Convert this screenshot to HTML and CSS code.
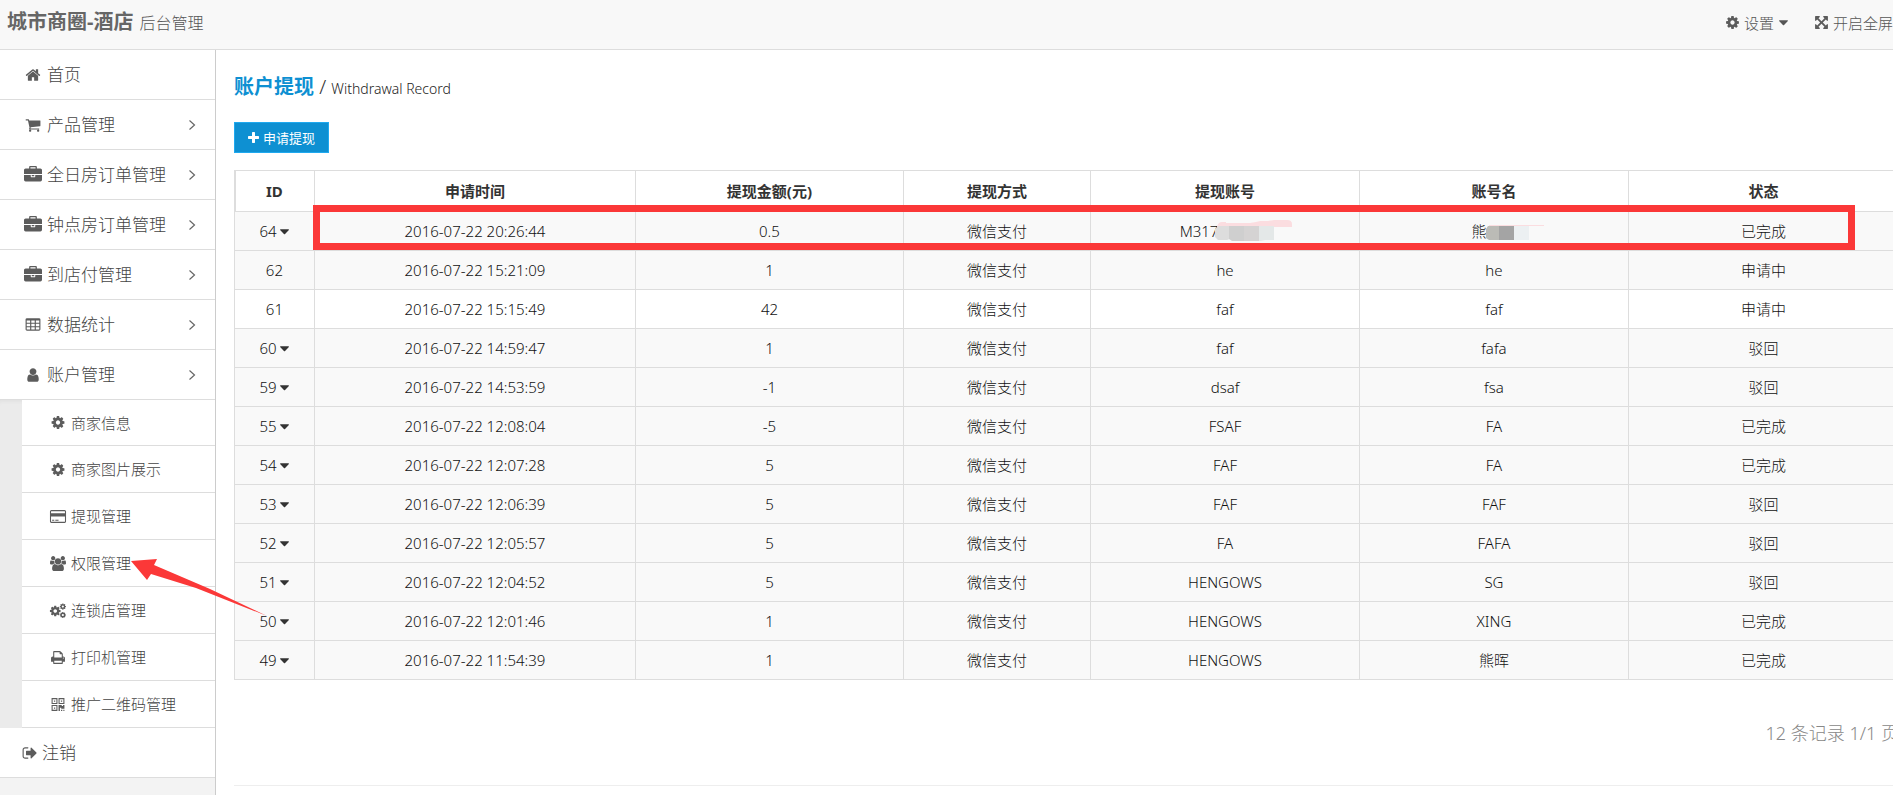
FILE: index.html
```html
<!DOCTYPE html>
<html lang="zh-CN">
<head>
<meta charset="utf-8">
<title>账户提现</title>
<link rel="stylesheet" href="styles.css">
</head>
<body>
<svg class="sprite" aria-hidden="true">
  <symbol id="home" viewBox="0 0 1792 1792"><path d="M1472 992v480q0 26-19 45t-45 19h-384v-384h-256v384h-384q-26 0-45-19t-19-45v-480q0-1 .5-3t.5-3l575-474 575 474q1 2 1 6zm223-69l-62 74q-8 9-21 11h-3q-13 0-21-7l-692-577-692 577q-12 8-24 7-13-2-21-11l-62-74q-8-10-7-23.5t11-21.5l719-599q32-26 76-26t76 26l244 204v-195q0-14 9-23t23-9h192q14 0 23 9t9 23v408l219 182q10 8 11 21.5t-7 23.5z"/></symbol>
  <symbol id="cart" viewBox="0 0 1792 1792"><path d="M704 1536q0 52-38 90t-90 38-90-38-38-90 38-90 90-38 90 38 38 90zm896 0q0 52-38 90t-90 38-90-38-38-90 38-90 90-38 90 38 38 90zm128-1088v512q0 24-16.5 42.5t-40.5 21.5l-1044 122q13 60 13 70 0 16-24 64h920q26 0 45 19t19 45-19 45-45 19h-1024q-26 0-45-19t-19-45q0-11 8-31.5t16-36 21.5-40 15.5-29.5l-177-823h-204q-26 0-45-19t-19-45 19-45 45-19h256q16 0 28.5 6.5t19.5 15.5 13 24.5 8 26 5.5 29.5 4.5 26h1201q26 0 45 19t19 45z"/></symbol>
  <symbol id="briefcase" viewBox="0 0 1792 1792"><path d="M640 256h512v-128h-512v128zm1152 640v480q0 66-47 113t-113 47h-1472q-66 0-113-47t-47-113v-480h672v160q0 26 19 45t45 19h320q26 0 45-19t19-45v-160h672zm-768 0v128h-256v-128h256zm768-480v384h-1792v-384q0-66 47-113t113-47h352v-160q0-40 28-68t68-28h576q40 0 68 28t28 68v160h352q66 0 113 47t47 113z"/></symbol>
  <symbol id="table" viewBox="0 0 1792 1792"><path fill-rule="evenodd" d="M224 128h1344q66 0 113 47t47 113v1088q0 66-47 113t-113 47h-1344q-66 0-113-47t-47-113v-1088q0-66 47-113t113-47zM192 384v256h384v-256zM704 384v256h384v-256zM1216 384v256h384v-256zM192 768v256h384v-256zM704 768v256h384v-256zM1216 768v256h384v-256zM192 1152v256h384v-256zM704 1152v256h384v-256zM1216 1152v256h384v-256z"/></symbol>
  <symbol id="user" viewBox="0 0 1792 1792"><path d="M1536 1399q0 109-62.500 187t-150.500 78h-854q-88 0-150.500-78t-62.500-187q0-85 8.500-160.500t31.500-152 58.500-131 94-89 134.500-34.500q131 128 313 128t313-128q76 0 134.500 34.500t94 89 58.500 131 31.500 152 8.500 160.500zm-256-887q0 159-112.500 271.500t-271.500 112.500-271.500-112.500-112.500-271.500 112.500-271.500 271.500-112.500 271.500 112.500 112.500 271.500z"/></symbol>
  <symbol id="cog" viewBox="0 0 1792 1792"><path d="M1152 896q0-106-75-181t-181-75-181 75-75 181 75 181 181 75 181-75 75-181zm512-109v222q0 12-8 23t-20 13l-185 28q-19 54-39 91 35 50 107 138 10 12 10 25t-9 23q-27 37-99 108t-94 71q-12 0-26-9l-138-108q-44 23-91 38-16 136-29 186-7 28-36 28h-222q-14 0-24.500-8.500t-11.500-21.500l-28-184q-49-16-90-37l-141 107q-10 9-25 9-14 0-25-11-126-114-165-168-7-10-7-23 0-12 8-23 15-21 51-66.500t54-70.500q-27-50-41-99l-183-27q-13-2-21-12.500t-8-23.500v-222q0-12 8-23t19-13l186-28q14-46 39-92-40-57-107-138-10-12-10-24 0-10 9-23 26-36 98.500-107.500t94.500-71.500q13 0 26 10l138 107q44-23 91-38 16-136 29-186 7-28 36-28h222q14 0 24.500 8.500t11.500 21.500l28 184q49 16 90 37l142-107q9-9 24-9 13 0 25 10 129 119 165 170 7 8 7 22 0 12-8 23-15 21-51 66.500t-54 70.500q26 50 41 98l183 28q13 2 21 12.500t8 23.500z"/></symbol>
  <symbol id="card" viewBox="0 0 1920 1792"><path fill-rule="evenodd" d="M160 128h1600q66 0 113 47t47 113v1216q0 66-47 113t-113 47h-1600q-66 0-113-47t-47-113v-1216q0-66 47-113t113-47zm0 128q-32 0-32 32v224h1664v-224q0-32-32-32zM128 896v608q0 32 32 32h1600q32 0 32-32v-608zM256 1280h256v128h-256zM640 1280h384v128h-384z"/></symbol>
  <symbol id="users" viewBox="-64 0 1920 1792"><path d="M529 896q-162 5-265 128h-134q-82 0-138-40.500t-56-118.500q0-353 124-353 6 0 43.500 21t97.500 42.500 119 21.500q67 0 133-23-5 37-5 66 0 139 81 256zm1071 637q0 120-73 189.500t-194 69.500h-874q-121 0-194-69.500t-73-189.500q0-53 3.500-103.500t14-109 26.500-108.500 43-97.500 62-81 85.500-53.500 111.500-20q10 0 43 21.500t73 48 107 48 135 21.500 135-21.500 107-48 73-48 43-21.500q61 0 111.500 20t85.500 53.500 62 81 43 97.500 26.500 108.500 14 109 3.500 103.500zm-1024-1277q0 106-75 181t-181 75-181-75-75-181 75-181 181-75 181 75 75 181zm704 384q0 159-112.500 271.500t-271.500 112.500-271.500-112.500-112.500-271.500 112.500-271.500 271.500-112.500 271.500 112.500 112.500 271.500zm576 225q0 78-56 118.500t-138 40.500h-134q-103-123-265-128 81-117 81-256 0-29-5-66 66 23 133 23 59 0 119-21.500t97.500-42.500 43.500-21q124 0 124 353zm-128-609q0 106-75 181t-181 75-181-75-75-181 75-181 181-75 181 75 75 181z"/></symbol>
  <symbol id="cogs" viewBox="0 0 1920 1792"><use href="#cog" x="-110" y="220" width="1480" height="1480"/><use href="#cog" x="1110" y="0" width="860" height="860"/><use href="#cog" x="1110" y="1000" width="860" height="860"/></symbol>
  <symbol id="print" viewBox="0 0 1792 1792"><path d="M448 1536h896v-256h-896v256zm0-640h896v-384h-160q-40 0-68-28t-28-68v-160h-640v640zm1152 64q0-26-19-45t-45-19-45 19-19 45 19 45 45 19 45-19 19-45zm128 0v416q0 13-9.500 22.500t-22.500 9.500h-224v160q0 40-28 68t-68 28h-960q-40 0-68-28t-28-68v-160h-224q-13 0-22.500-9.500t-9.500-22.500v-416q0-79 56.500-135.500t135.500-56.500h64v-544q0-40 28-68t68-28h672q40 0 88 20t76 48l152 152q28 28 48 76t20 88v256h64q79 0 135.500 56.500t56.500 135.500z"/></symbol>
  <symbol id="qr" viewBox="0 0 14 14"><path fill-rule="evenodd" d="M1 1h5.500v5.500h-5.500zM2 2v3.500h3.500v-3.500zM7.500 1h5.500v5.500h-5.500zM8.500 2v3.500h3.500v-3.500zM1 7.500h5.500v5.500h-5.500zM2 8.500v3.500h3.500v-3.500zM3.200 3.200h1.200v1.200h-1.200zM9.700 3.200h1.200v1.200h-1.200zM3.200 9.700h1.200v1.200h-1.200zM7.500 7.500h3v1h1.200v-1h1.300v3.500h-3v-1h-1.200v3h-1.300zM9.800 12h1.200v1h-1.200zM12 12h1v1h-1z"/></symbol>
  <symbol id="signout" viewBox="0 0 1792 1792"><path d="M704 1440q0 4 1 20t.5 26.500-3 23.500-10 19.500-20.500 6.500h-320q-119 0-203.500-84.500t-84.500-203.500v-704q0-119 84.500-203.500t203.500-84.500h320q13 0 22.500 9.500t9.500 22.500q0 4 1 20t.5 26.500-3 23.500-10 19.500-20.500 6.500h-320q-66 0-113 47t-47 113v704q0 66 47 113t113 47h312l11.500 1 11.500 3 8 5.500 7 9 2 13.500zm928-544q0 26-19 45l-544 544q-19 19-45 19t-45-19-19-45v-288h-448q-26 0-45-19t-19-45v-384q0-26 19-45t45-19h448v-288q0-26 19-45t45-19 45 19l544 544q19 19 19 45z"/></symbol>
  <symbol id="expand" viewBox="0 0 1792 1792"><path d="M1411 541l-355 355 355 355 144-144q29-31 70-14 39 17 39 59v448q0 26-19 45t-45 19h-448q-42 0-59-40-17-39 14-69l144-144-355-355-355 355 144 144q31 30 14 69-17 40-59 40h-448q-26 0-45-19t-19-45v-448q0-42 40-59 39-17 69 14l144 144 355-355-355-355-144 144q-19 19-45 19-12 0-24-5-40-17-40-59v-448q0-26 19-45t45-19h448q42 0 59 40 17 39-14 69l-144 144 355 355 355-355-144-144q-31-30-14-69 17-40 59-40h448q26 0 45 19t19 45v448q0 42-39 59-13 5-25 5-26 0-45-19z"/></symbol>
  <symbol id="plus" viewBox="192 192 1408 1408"><path d="M1600 800v192q0 40-28 68t-68 28h-416v416q0 40-28 68t-68 28h-192q-40 0-68-28t-28-68v-416h-416q-40 0-68-28t-28-68v-192q0-40 28-68t68-28h416v-416q0-40 28-68t68-28h192q40 0 68 28t28 68v416h416q40 0 68 28t28 68z"/></symbol>
  <symbol id="angle" viewBox="0 0 8 12"><path d="M1.500 1.500l5 4.500-5 4.500" fill="none" stroke="currentColor" stroke-width="1.200"/></symbol>
  <symbol id="caret" viewBox="0 0 8 5"><path d="M.5 0h7q.8.300.2 1l-3.200 3.200q-.5.400-1 0l-3.200-3.200q-.6-.7.2-1z"/></symbol>
</svg>

<header class="topbar">
  <div class="brand"><strong>城市商圈-酒店</strong><small>后台管理</small></div>
  <nav class="topnav">
    <a href="#"><svg class="icon"><use href="#cog"/></svg>设置<svg class="caret"><use href="#caret"/></svg></a>
    <a href="#"><svg class="icon"><use href="#expand"/></svg>开启全屏</a>
  </nav>
</header>

<div class="layout">
  <aside class="sidebar">
    <ul class="menu">
      <li><a href="#"><svg class="icon"><use href="#home"/></svg>首页</a></li>
      <li><a href="#"><svg class="icon"><use href="#cart"/></svg>产品管理<svg class="angle"><use href="#angle"/></svg></a></li>
      <li><a href="#"><svg class="icon wide"><use href="#briefcase"/></svg>全日房订单管理<svg class="angle"><use href="#angle"/></svg></a></li>
      <li><a href="#"><svg class="icon wide"><use href="#briefcase"/></svg>钟点房订单管理<svg class="angle"><use href="#angle"/></svg></a></li>
      <li><a href="#"><svg class="icon wide"><use href="#briefcase"/></svg>到店付管理<svg class="angle"><use href="#angle"/></svg></a></li>
      <li><a href="#"><svg class="icon"><use href="#table"/></svg>数据统计<svg class="angle"><use href="#angle"/></svg></a></li>
      <li><a href="#"><svg class="icon"><use href="#user"/></svg>账户管理<svg class="angle"><use href="#angle"/></svg></a>
        <ul class="submenu">
          <li><a href="#"><svg class="icon"><use href="#cog"/></svg>商家信息</a></li>
          <li><a href="#"><svg class="icon"><use href="#cog"/></svg>商家图片展示</a></li>
          <li><a href="#"><svg class="icon"><use href="#card"/></svg>提现管理</a></li>
          <li><a href="#"><svg class="icon"><use href="#users"/></svg>权限管理</a></li>
          <li><a href="#"><svg class="icon"><use href="#cogs"/></svg>连锁店管理</a></li>
          <li><a href="#"><svg class="icon"><use href="#print"/></svg>打印机管理</a></li>
          <li><a href="#"><svg class="icon"><use href="#qr"/></svg>推广二维码管理</a></li>
        </ul>
      </li>
      <li class="logout"><a href="#"><svg class="icon"><use href="#signout"/></svg>注销</a></li>
    </ul>
  </aside>

  <main class="content">
    <h1 class="title"><strong>账户提现</strong> / <small>Withdrawal Record</small></h1>
    <button class="apply" type="button"><svg class="plus"><use href="#plus"/></svg>申请提现</button>

    <div class="records">
      <table>
        <colgroup><col class="c-id"><col class="c-time"><col class="c-sum"><col class="c-way"><col class="c-acct"><col class="c-acct"><col></colgroup>
        <thead>
          <tr><th>ID</th><th>申请时间</th><th>提现金额(元)</th><th>提现方式</th><th>提现账号</th><th>账号名</th><th>状态</th></tr>
        </thead>
        <tbody>
          <tr><td>64 <svg class="caret"><use href="#caret"/></svg></td><td>2016-07-22 20:26:44</td><td>0.5</td><td>微信支付</td>
            <td><span class="masked account">M317<svg viewBox="0 0 80 24" aria-hidden="true"><path fill="#fbdde0" d="M3 9q1-5 5-5h4v1h24l6-1 4-1h8l6-1h13q5 0 5 4v3z"/><path fill="#ddd" d="M4 8h12v13l-3 1h-9l-3-3v-8z"/><path fill="#cfcfcf" d="M15 8h15v15h-12l-3-2z"/><path fill="#d5d3d3" d="M30 8h15v15h-15z"/><path fill="#e4e8e8" d="M45 8h15v14h-9l-4 1h-2z"/></svg></span></td>
            <td><span class="masked name">熊<svg viewBox="0 0 80 24" aria-hidden="true"><path fill="#fbdde0" d="M3 7h55v1h-55z"/><path fill="#bbbbb6" d="M2 8h11v14h-10l-3-2v-9z"/><path fill="#a4a4a4" d="M13 8h15v14h-15z"/><path fill="#ecf0f2" d="M28 8h15v14h-15z"/></svg></span></td><td>已完成</td></tr>
          <tr><td>62</td><td>2016-07-22 15:21:09</td><td>1</td><td>微信支付</td><td>he</td><td>he</td><td>申请中</td></tr>
          <tr class="plain"><td>61</td><td>2016-07-22 15:15:49</td><td>42</td><td>微信支付</td><td>faf</td><td>faf</td><td>申请中</td></tr>
          <tr><td>60 <svg class="caret"><use href="#caret"/></svg></td><td>2016-07-22 14:59:47</td><td>1</td><td>微信支付</td><td>faf</td><td>fafa</td><td>驳回</td></tr>
          <tr><td>59 <svg class="caret"><use href="#caret"/></svg></td><td>2016-07-22 14:53:59</td><td>-1</td><td>微信支付</td><td>dsaf</td><td>fsa</td><td>驳回</td></tr>
          <tr><td>55 <svg class="caret"><use href="#caret"/></svg></td><td>2016-07-22 12:08:04</td><td>-5</td><td>微信支付</td><td>FSAF</td><td>FA</td><td>已完成</td></tr>
          <tr><td>54 <svg class="caret"><use href="#caret"/></svg></td><td>2016-07-22 12:07:28</td><td>5</td><td>微信支付</td><td>FAF</td><td>FA</td><td>已完成</td></tr>
          <tr><td>53 <svg class="caret"><use href="#caret"/></svg></td><td>2016-07-22 12:06:39</td><td>5</td><td>微信支付</td><td>FAF</td><td>FAF</td><td>驳回</td></tr>
          <tr><td>52 <svg class="caret"><use href="#caret"/></svg></td><td>2016-07-22 12:05:57</td><td>5</td><td>微信支付</td><td>FA</td><td>FAFA</td><td>驳回</td></tr>
          <tr><td>51 <svg class="caret"><use href="#caret"/></svg></td><td>2016-07-22 12:04:52</td><td>5</td><td>微信支付</td><td>HENGOWS</td><td>SG</td><td>驳回</td></tr>
          <tr><td>50 <svg class="caret"><use href="#caret"/></svg></td><td>2016-07-22 12:01:46</td><td>1</td><td>微信支付</td><td>HENGOWS</td><td>XING</td><td>已完成</td></tr>
          <tr><td>49 <svg class="caret"><use href="#caret"/></svg></td><td>2016-07-22 11:54:39</td><td>1</td><td>微信支付</td><td>HENGOWS</td><td>熊晖</td><td>已完成</td></tr>
        </tbody>
      </table>
      <div class="highlight"></div>
    </div>

    <p class="pager">12 条记录 1/1 页</p>
    <hr>
  </main>
  <svg class="pointer" viewBox="0 0 138 60" aria-hidden="true"><path d="M1 4l26-2-3 6 56 24 57 27-71-28-45-14-4 6z"/></svg>
</div>
</body>
</html>
```
FILE: styles.css
```css
* { box-sizing: border-box; }

body {
  margin: 0;
  min-height: 100vh;
  display: flex;
  flex-direction: column;
  overflow: hidden;
  background: #fff;
  color: #333;
  font: 300 15px/24px "Noto Sans", "Noto Sans CJK SC", sans-serif;
}

a { color: inherit; text-decoration: none; }
ul { list-style: none; margin: 0; padding: 0; }
svg { fill: currentColor; flex: none; }
.sprite { position: absolute; width: 0; height: 0; }
.icon { width: 15px; height: 15px; color: #5c5c5c; }
.caret { width: 9px; height: 6px; }

.topbar {
  display: flex;
  justify-content: space-between;
  align-items: center;
  height: 50px;
  padding: 0 0 4px 7px;
  background: #f8f8f8;
  border-bottom: 1px solid #ddd;
  color: #555;
}
.brand { display: flex; align-items: baseline; gap: 6px; white-space: nowrap; }
.brand strong { color: #666; font-size: 20px; font-weight: 700; }
.brand small { font-size: 16px; }
.topnav { display: flex; gap: 26px; white-space: nowrap; }
.topnav a { display: flex; align-items: center; gap: 4px; }
.topnav .caret { margin-left: 1px; }

.layout { position: relative; display: flex; flex: 1; }

.sidebar {
  flex: 0 0 216px;
  background: #f3f3f3;
  border-right: 1px solid #ccc;
  color: #444;
}
.menu > li { background: #fff; }
.menu > li > a {
  display: flex;
  align-items: center;
  height: 50px;
  padding: 0 19px 0 24px;
  border-bottom: 1px solid #ddd;
  font-size: 17px;
}
.menu > li > a > .icon { width: 18px; height: 16px; margin-right: 5px; }
.menu > li > a > .wide { height: 18px; }
.menu .angle { width: 8px; height: 12px; margin-left: auto; color: #666; }
.menu > .logout > a { padding-left: 21px; }
.menu > .logout .icon { margin-right: 3px; }

.submenu {
  padding-left: 22px;
  background: #ebebeb;
  box-shadow: inset 0 4px 4px -3px #ddd;
}
.submenu a {
  display: flex;
  align-items: center;
  gap: 4px;
  height: 47px;
  padding-left: 27px;
  background: #fff;
  border-bottom: 1px solid #ddd;
}
.submenu li:first-child a { height: 46px; }
.submenu .icon { width: 18px; }

.content { flex: 1; min-width: 0; margin-right: -6px; padding: 21px 0 0 18px; }
.title { margin: 0; font-size: 20px; line-height: 31px; font-weight: 300; }
.title strong { color: #0e90d2; font-weight: 700; }
.title small { color: #222; font-size: 14px; font-weight: 300; }

.apply {
  display: flex;
  align-items: center;
  gap: 4px;
  height: 31px;
  margin: 18px 0 17px;
  padding: 0 13px;
  border: 1px solid #1fa9ef;
  background: #0e90d2;
  color: #fff;
  font: 400 13px/16px "Noto Sans", "Noto Sans CJK SC", sans-serif;
}
.plus { width: 11px; height: 11px; }

.records { position: relative; }
table { width: 100%; table-layout: fixed; border-collapse: collapse; text-align: center; }
.c-id { width: 4.8%; }
.c-time { width: 19.3%; }
.c-sum { width: 16.1%; }
.c-way { width: 11.25%; }
.c-acct { width: 16.16%; }
th, td { border: 1px solid #ddd; padding: 7px 0; }
th { padding: 8px 0; font-weight: 700; }
th:first-child { box-shadow: inset 1px 0 #ddd; }
td { background: #f9f9f9; color: #111; }
.plain td { background: #fff; }
td .caret { color: #333; vertical-align: 2px; }

.masked { position: relative; display: inline-block; }
.masked svg { position: absolute; top: -1px; width: 80px; height: 24px; }
.account { padding-right: 52px; }
.account svg { left: 34px; }
.name { padding-right: 30px; }
.name svg { left: 15px; }

.highlight {
  position: absolute;
  top: 35px;
  left: 79px;
  right: 44px;
  height: 45px;
  border: 7px solid #fb3838;
}
.pointer {
  position: absolute;
  left: 130px;
  top: 507px;
  width: 138px;
  height: 60px;
  fill: #fb3838;
}

.pager { margin: 40px 0 38px; color: #888; font-size: 18px; line-height: 27px; text-align: right; }
hr { margin: 0; border: 0; border-top: 1px solid #eee; }
```
